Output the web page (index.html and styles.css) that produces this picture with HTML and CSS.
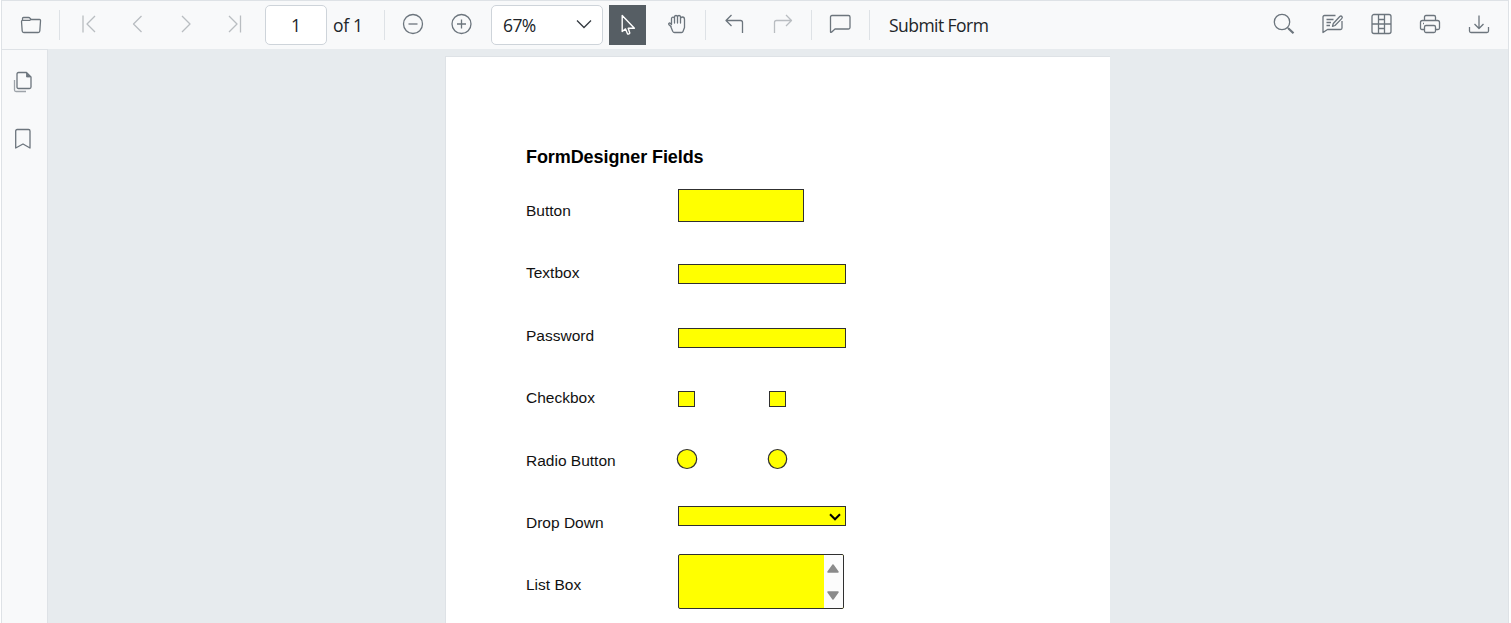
FILE: index.html
```html
<!DOCTYPE html>
<html lang="en">
<head>
<meta charset="utf-8">
<title>PDF Viewer</title>
<link rel="stylesheet" href="styles.css">
</head>
<body>
<div class="viewer">
  <header class="toolbar">
    <svg class="icon open" viewBox="0 0 24 24"><path d="M3.500 8V6.500Q3.500 5.500 4.500 5.500H9.500Q10.500 5.500 11 6.200L12.200 7.500H20.500Q21.700 7.500 21.500 9L20.800 19Q20.700 20.500 19.200 20.500H4.800Q3.300 20.500 3.200 19L2.500 9.500Q2.500 8.300 3.500 8.300H10.500L12.200 7.500"/></svg>
    <i class="sep s1"></i>
    <svg class="icon dim first" viewBox="0 0 24 24"><path d="M6 3.500V20.500M18 4 10 12 18 20"/></svg>
    <svg class="icon dim prev" viewBox="0 0 24 24"><path d="M16.500 4 8.500 12 16.500 20"/></svg>
    <svg class="icon dim next" viewBox="0 0 24 24"><path d="M8 4 16 12 8 20"/></svg>
    <svg class="icon dim last" viewBox="0 0 24 24"><path d="M18.500 3.500V20.500M7 4 15 12 7 20"/></svg>
    <div class="page-box">1</div>
    <span class="total">of 1</span>
    <i class="sep"></i>
    <svg class="icon minus" viewBox="0 0 24 24"><circle cx="12" cy="12" r="9.500"/><path d="M7.500 12H16.500"/></svg>
    <svg class="icon plus" viewBox="0 0 24 24"><circle cx="12.500" cy="12" r="9.500"/><path d="M8 12H17M12.500 7.500V16.500"/></svg>
    <div class="zoom"><span>67%</span><svg class="chev" viewBox="0 0 16 10"><path d="M1 1.500 8 8.500 15 1.500"/></svg></div>
    <div class="pointer"><svg viewBox="0 0 24 24"><path d="M6.200 2.500V18.500L9.500 15.900 11.500 20.800Q12 21.500 13.300 20.700L13.800 20 12.200 15.300H18.400Z"/></svg></div>
    <svg class="icon hand" viewBox="0 0 24 24"><path d="M6.500 15 4 12.800Q3.200 11.500 4.300 11Q5.200 10.800 6.500 12.500V6.500Q6.700 5.200 8 5.200T9.500 6.500V11V4.700Q9.700 3.500 11 3.500T12.500 4.700V11V4.700Q12.700 3.500 14 3.500T15.500 4.700V11V6.500Q15.800 5 17.500 5Q19.500 5 19.500 7.500V15.500L18 19.500Q17.700 20.500 16.500 20.500H9.500Q8.300 20.500 7.700 19.300L5.500 14"/></svg>
    <i class="sep s2"></i>
    <svg class="icon undo" viewBox="0 0 24 24"><path d="M9.500 3 4 8.500 9.500 14M4 8.500H18.500Q20.500 8.500 20.500 10.500V21"/></svg>
    <svg class="icon dim redo" viewBox="0 0 24 24"><path d="M16 3 21.500 8.500 16 14M21.500 8.500H6.500Q4.500 8.500 4.500 10.500V21"/></svg>
    <i class="sep s3"></i>
    <svg class="icon note" viewBox="0 0 24 24"><path d="M2.500 20V5Q2.500 3.500 4 3.500H20.500Q22 3.500 22 5V15.500Q22 17 20.500 17H7L3.500 20.200Q2.500 20.700 2.500 20Z"/></svg>
    <i class="sep s3"></i>
    <span class="submit">Submit Form</span>
    <div class="tools">
      <svg class="icon" viewBox="0 0 24 24"><circle cx="10" cy="10" r="7.700"/><path d="M15.500 15.500 17 17"/><path class="thick" d="M16.500 16.500 21.500 21.300"/></svg>
      <svg class="icon edit" viewBox="0 0 24 24"><path d="M15.500 3.500H4.500Q3 3.500 3 5V20.500L7.500 17.500H20.500Q22 17.500 22 16V9M6.500 7.500H13.500M6.500 10.500H11M6.500 13.500H10M12.500 14.300 13.300 11.500 19.800 4.500Q21 3.500 21.900 4.500T21.700 6.600L15 13.500Z"/></svg>
      <svg class="icon grid" viewBox="0 0 24 24"><rect x="3" y="2.500" width="19" height="19" rx="2"/><path d="M9.500 2.500V21.500M15.500 2.500V21.500M3 12H22M9.500 7.500H15.500M9.500 16.500H15.500"/></svg>
      <svg class="icon print" viewBox="0 0 24 24"><path d="M6.500 8V5Q6.500 3.500 8 3.500H16Q17.500 3.500 17.500 5V8M6 17.500H4Q2.500 17.500 2.500 16V10.500Q2.500 8.500 4.500 8.500H19.500Q21.500 8.500 21.500 10.500V16Q21.500 17.500 20 17.500H18M5 11.500H6"/><rect x="6.500" y="13.500" width="11" height="7" rx="1.500"/></svg>
      <svg class="icon save" viewBox="0 0 24 24"><path d="M12 3.500V16.500M7.500 12 12 16.500 16.500 12M2.500 15V19Q2.500 20.500 4 20.500H20Q21.500 20.500 21.500 19V15"/></svg>
    </div>
  </header>
  <div class="body">
    <nav class="side">
      <svg class="icon" viewBox="0 0 24 24"><path class="back" d="M3.500 10V20Q3.500 21.500 5 21.500H15"/><path d="M6 4Q6 2.500 7.500 2.500H15.500L20 7V17Q20 18.500 18.500 18.500H7.500Q6 18.500 6 17Z"/><path class="fold" d="M15.500 3V7H19.500Z"/></svg>
      <svg class="icon" viewBox="0 0 24 24"><path d="M4.700 21V4Q4.700 2.500 6.200 2.500H17.500Q19 2.500 19 4V21L12 17Z"/></svg>
    </nav>
    <main class="canvas">
      <section class="paper">
        <h1>FormDesigner Fields</h1>
        <div class="form">
          <label>Button</label><div class="field button"></div>
          <label>Textbox</label><div class="field text"></div>
          <label>Password</label><div class="field text password"></div>
          <label>Checkbox</label><div class="pair checks"><i class="field check"></i><i class="field check"></i></div>
          <label>Radio Button</label><div class="pair radios"><svg viewBox="0 0 22 22"><ellipse cx="11" cy="11" rx="9.700" ry="9.500"/></svg><svg viewBox="0 0 22 22"><ellipse cx="10.500" cy="11" rx="9.200" ry="9.500"/></svg></div>
          <label>Drop Down</label><div class="field text drop"><svg viewBox="0 0 12 8"><path d="M1 1.300 6 6.300 11 1.300"/></svg></div>
          <label>List Box</label><div class="field list"><div class="scroll"><svg viewBox="0 0 12 9"><path d="M6 1 11 8H1Z"/></svg><svg viewBox="0 0 12 9"><path d="M6 8 11 1H1Z"/></svg></div></div>
        </div>
      </section>
    </main>
  </div>
</div>
</body>
</html>
```
FILE: styles.css
```css
* { box-sizing: border-box; }
body { margin: 0; background: #fff; overflow: hidden; font-family: "Open Sans", "Noto Sans", sans-serif; }
.viewer { width: 1508px; height: 623px; margin-left: 1px; border: 1px solid #dee2e6; border-bottom: 0; display: flex; flex-direction: column; }
.toolbar { height: 48px; flex: none; background: #f8f9fa; display: flex; align-items: center; padding-right: 17px; color: #212529; font-size: 17.500px; }
.toolbar > .icon, .tools { position: relative; top: -1px; }
.icon { width: 24px; height: 24px; flex: none; fill: none; stroke: #6c757d; stroke-width: 1.300; stroke-linejoin: round; }
.dim { stroke: #b9bdc1; }
.sep { width: 1px; height: 30px; background: #dee2e6; flex: none; }
.open { margin-left: 17px; }
.s1 { margin-left: 16px; }
.first { margin-left: 17px; }
.prev, .last, .plus, .redo { margin-left: 24px; }
.next { margin-left: 25px; }
.page-box, .zoom { height: 40px; background: #fff; border: 1px solid #ced4da; border-radius: 5px; display: flex; align-items: center; flex: none; }
.page-box { width: 62px; margin-left: 19px; justify-content: center; padding-bottom: 1px; }
.total { width: 51px; margin-left: 6px; flex: none; margin-top: -1px; letter-spacing: -.3px; }
.minus { margin-left: 16px; }
.zoom { width: 112px; margin-left: 18px; padding: 0 10px 1px 11px; justify-content: space-between; letter-spacing: -.6px; }
.chev { width: 16px; height: 10px; margin-top: -1px; fill: none; stroke: #343a40; stroke-width: 1.300; }
.pointer { width: 37px; height: 40px; margin-left: 6px; background: #565e64; display: grid; place-items: center; flex: none; }
.pointer svg { width: 24px; height: 24px; margin-top: -1px; fill: none; stroke: #fff; stroke-width: 1.400; stroke-linejoin: round; }
.hand { margin-left: 19px; }
.s2, .undo, .note { margin-left: 16px; }
.s3 { margin-left: 17px; }
.submit { margin-left: 19px; margin-top: -1px; white-space: nowrap; letter-spacing: -.550px; }
.tools { display: flex; margin-left: auto; }
.edit { margin-left: 24px; }
.grid, .print, .save { margin-left: 25px; }
.thick { stroke-width: 2.200; }
.body { display: flex; flex: 1; min-height: 0; }
.side { width: 46px; border-top: 1px solid #dee2e6; border-right: 1px solid #dee2e6; background: #f8f9fa; padding: 20px 0 0 9px; display: flex; flex-direction: column; gap: 33px; }
.back { stroke: #9da3a9; }
.fold { fill: #6c757d; stroke-width: .8; }
.canvas { flex: 1; background: #e7ebee; padding: 7px 0 0 397px; overflow: hidden; }
.paper { width: 665px; height: 900px; background: #fff; border: 1px solid #dee2e6; border-right: 0; padding: 89px 0 0 80px; font-family: "Liberation Sans", Arial, sans-serif; color: #111; }
h1 { margin: 0; font-size: 18px; line-height: 22px; letter-spacing: -.08px; color: #000; }
.form { display: grid; grid-template-columns: 152px auto; grid-template-rows: 62px 63px 62px 63px 62px 62px 62px; margin-top: 12px; align-items: start; justify-content: start; font-size: 15.500px; }
label { line-height: 62px; }
.field { background: #ff0; border: 1px solid #303030; }
.button { width: 126px; height: 33px; margin-top: 9px; }
.text { width: 168px; height: 20px; margin-top: 22px; }
.password { margin-top: 23px; }
.pair { display: flex; }
.checks { gap: 74px; margin-top: 24px; }
.check { width: 17px; height: 16px; }
.radios { gap: 69px; margin: 18px 0 0 -2px; }
.radios svg { width: 22px; height: 22px; fill: #ff0; stroke: #303030; stroke-width: 1.200; }
.drop { margin-top: 14px; display: flex; align-items: center; justify-content: flex-end; padding-right: 4px; }
.drop svg { width: 12px; height: 8px; margin-top: 1px; fill: none; stroke: #000; stroke-width: 2; }
.list { width: 166px; height: 55px; border-radius: 2px; display: flex; justify-content: flex-end; overflow: hidden; }
.scroll { width: 19px; background: #fcfcfc; display: flex; flex-direction: column; align-items: center; justify-content: space-between; padding: 9px 0 8px; }
.scroll svg { width: 12px; height: 9px; margin-left: -1px; fill: #8b8b8b; stroke: #8b8b8b; stroke-width: 1.500; stroke-linejoin: round; }
```
